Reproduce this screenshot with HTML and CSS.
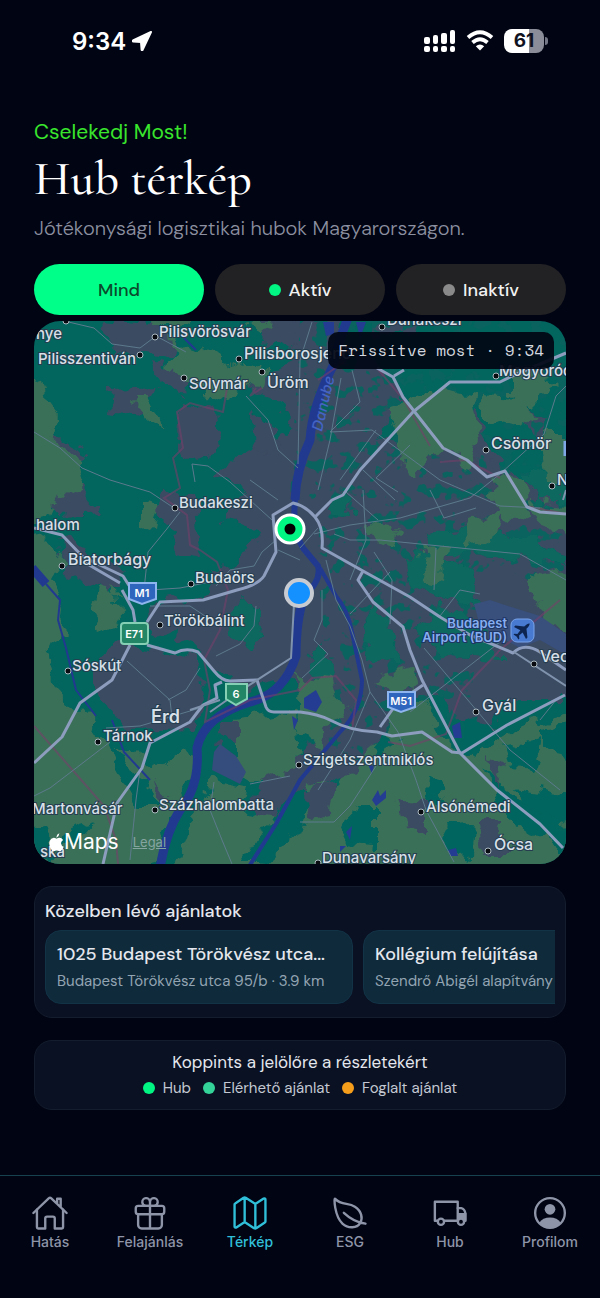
FILE: index.html
```html
<!DOCTYPE html>
<html lang="hu">
<head>
    <meta charset="UTF-8">
    <meta name="viewport" content="width=device-width, initial-scale=1.0">
    <title>Hub térkép</title>
    <link rel="stylesheet" href="styles.css">
</head>
<body>
    <div class="status-bar">
        <div class="status-left">
            <span class="clock">9:34</span>
            <svg class="location" viewBox="0 0 20 20"><path d="M19 1 L1 9.5 Q0 10.2 1.2 10.4 L9 11 L9.6 18.8 Q9.9 20 10.6 18.9 Z" fill="#fff" stroke="#fff" stroke-width="2" stroke-linejoin="round"/></svg>
        </div>
        <div class="status-right">
            <svg class="signal" viewBox="0 0 32 22" fill="#fff">
                <rect x="0" y="7" width="6" height="7" rx="2"/><rect x="9" y="5" width="5" height="9" rx="2"/><rect x="17" y="3" width="6" height="11" rx="2"/><rect x="26" y="0" width="5" height="14" rx="2"/>
                <rect x="0" y="16" width="6" height="6" rx="2"/><rect x="9" y="16" width="5" height="6" rx="2"/><rect x="17" y="16" width="6" height="6" rx="2"/><rect x="26" y="16" width="5" height="6" rx="2"/>
            </svg>
            <svg class="wifi" viewBox="0 0 28 22" fill="none" stroke="#fff" stroke-width="3.8">
                <path d="M2 7.5 Q14 -3 26 7.5"/><path d="M6.5 12.5 Q14 6 21.5 12.5"/><path d="M14 20.5 L9.8 16.2 Q14 12.8 18.2 16.2 Z" fill="#fff" stroke="none"/>
            </svg>
            <span class="battery">61</span>
        </div>
    </div>

    <main>
        <header>
            <p class="eyebrow">Cselekedj Most!</p>
            <h1>Hub térkép</h1>
            <p class="subtitle">Jótékonysági logisztikai hubok Magyarországon.</p>
        </header>

        <div class="filters">
            <button type="button" class="filter active">Mind</button>
            <button type="button" class="filter"><span class="dot green"></span>Aktív</button>
            <button type="button" class="filter"><span class="dot gray"></span>Inaktív</button>
        </div>

        <section class="map">
            <svg class="map-canvas" viewBox="34 321 532 543" preserveAspectRatio="xMidYMid slice">
                <defs>
                    <filter id="rough" x="-5%" y="-5%" width="110%" height="110%">
                        <feTurbulence type="fractalNoise" baseFrequency="0.05" numOctaves="3" seed="4" result="n"/>
                        <feDisplacementMap in="SourceGraphic" in2="n" scale="26" xChannelSelector="R" yChannelSelector="G"/>
                    </filter>
                    <filter id="specks" x="0" y="0" width="100%" height="100%" color-interpolation-filters="sRGB">
                        <feTurbulence type="fractalNoise" baseFrequency="0.07" numOctaves="3" seed="11"/>
                        <feColorMatrix values="0 0 0 0 0.04  0 0 0 0 0.39  0 0 0 0 0.37  16 0 0 0 -9.1" result="s"/>
                        <feComposite in="s" in2="SourceGraphic" operator="in"/>
                    </filter>
                </defs>

                <rect x="34" y="321" width="532" height="543" fill="#02655e"/>

                <!-- towns -->
                <g fill="#3b4b62" filter="url(#rough)">
                    <path d="M286 310 L344 310 L336 350 L360 352 L400 380 L400 410 L380 440 L420 450 L444 444 L500 462 L520 480 L580 500 L580 700 L500 700 L496 726 L464 730 L444 690 L410 700 L404 730 L372 772 L330 780 L262 830 L248 800 L300 750 L330 730 L300 690 L284 680 L240 690 L196 650 L176 640 L178 606 L216 590 L214 570 L252 552 L262 530 L222 518 L244 490 L214 470 L262 446 L294 430 L276 400 L250 390 L272 370 L294 360Z"/>
                    <path d="M180 404 L216 408 L222 452 L186 462 L176 430Z M114 390 L154 388 L142 416 L112 412Z"/>
                    <path d="M104 318 L150 322 L180 346 L160 356 L112 350Z M154 360 L186 366 L184 396 L162 388Z"/>
                    <path d="M250 410 L276 430 L278 460 L256 450Z M260 316 L300 316 L294 340 L266 350Z"/>
                    <path d="M34 424 L56 436 L86 452 L80 468 L46 448Z M42 496 L74 480 L104 514 L60 516Z"/>
                    <path d="M60 538 L90 548 L124 576 L108 594 L62 570Z M164 486 L194 500 L200 556 L178 552 L158 510Z"/>
                    <path d="M94 664 L120 640 L140 644 L150 652 L196 660 L206 700 L190 730 L130 732 L112 710 L94 690Z"/>
                    <path d="M148 606 L180 600 L184 620 L152 636Z"/>
                    <path d="M222 724 L244 724 L240 748 L220 744Z M214 782 L230 800 L222 830 L204 822Z"/>
                    <path d="M372 312 L420 316 L410 336 L370 338Z M476 405 L484 440 L510 460 L478 466 L466 440Z M520 400 L552 420 L540 444 L516 420Z"/>
                </g>
                <path filter="url(#specks)" d="M300 321 L566 321 L566 600 L490 560 L470 700 L420 760 L330 760 L318 560 L320 500 L290 500Z"/>

                <!-- parks and woods between the districts -->
                <g fill="#08685e" filter="url(#rough)">
                    <path d="M424 536 L500 530 L566 552 L566 566 L510 556 L432 552Z M404 556 L430 554 L470 572 L480 606 L446 600 L410 584Z"/>
                    <path d="M372 600 L392 630 L402 664 L374 660 L362 630Z M440 600 L500 640 L500 660 L440 656 L420 630Z"/>
                    <path d="M336 490 L356 500 L346 520 L330 510Z M240 600 L262 606 L258 650 L236 640 L226 616Z"/>
                    <path d="M520 470 L566 480 L566 500 L536 500Z M322 640 L334 680 L322 690 L310 664Z"/>
                </g>

                <!-- farmland -->
                <g fill="#3b7058" filter="url(#rough)">
                    <path d="M24 436 L50 436 L66 450 L88 466 L78 490 L58 498 L50 516 L24 522Z"/>
                    <path d="M24 376 L42 382 L46 402 L58 418 L54 438 L24 436Z"/>
                    <path d="M24 540 L50 535 L62 560 L48 580 L64 610 L60 640 L42 650 L56 700 L24 700Z"/>
                    <path d="M96 590 L118 592 L120 620 L100 628 L90 610Z M110 584 L122 586 L124 600Z"/>
                    <path d="M142 504 L160 508 L156 530 L142 524Z M134 396 L146 396 L168 432 L150 424Z"/>
                    <path d="M145 310 L190 310 L184 328 L150 328Z M170 340 L205 350 L246 368 L230 402 L200 394 L174 366Z"/>
                    <path d="M240 360 L268 366 L266 392 L244 388Z M246 318 L270 318 L262 338Z"/>
                    <path d="M24 690 L62 694 L88 716 L106 744 L134 748 L150 770 L184 744 L200 770 L180 800 L164 830 L150 884 L24 884Z"/>
                    <path d="M236 720 L294 710 L298 772 L262 784 L236 768Z"/>
                    <path d="M210 780 L244 788 L240 810 L300 820 L310 780 L330 790 L350 770 L384 740 L440 736 L486 766 L510 800 L544 820 L584 850 L584 884 L170 884 L192 820Z"/>
                    <path d="M298 676 L332 680 L342 712 L320 744 L296 734Z M376 682 L412 664 L416 684 L392 704Z"/>
                    <path d="M384 710 L424 700 L446 740 L430 760 L380 756Z"/>
                    <path d="M470 756 L520 726 L584 710 L584 838 L540 806 L500 794Z"/>
                    <path d="M390 410 L430 386 L472 396 L478 440 L468 464 L440 450 L418 474 L400 460Z"/>
                    <path d="M484 396 L520 398 L540 416 L520 430 L486 420Z M510 368 L554 380 L528 406 L510 394Z"/>
                    <path d="M496 474 L526 480 L528 514 L508 524 L494 500Z M544 436 L584 436 L584 484 L548 480Z"/>
                    <path d="M530 500 L584 506 L584 540 L540 530Z M468 524 L502 508 L496 538 L470 550Z"/>
                    <path d="M530 576 L584 566 L584 640 L544 620Z M420 545 L446 544 L442 584 L424 580Z M374 524 L400 526 L396 544 L376 540Z"/>
                </g>

                <!-- forest inside the fields -->
                <g fill="#02655e" filter="url(#rough)">
                    <path d="M352 806 L378 806 L378 850 L342 846Z M500 746 L544 736 L534 770 L508 768Z"/>
                    <path d="M516 786 L576 796 L560 826 L530 814Z M440 826 L470 824 L468 854 L446 850Z"/>
                    <path d="M96 820 L70 828 L56 852 L76 842Z M546 726 L576 722 L572 756 L546 750Z"/>
                    <path d="M290 790 L316 790 L300 830 L262 864 L240 864 L276 816Z M426 776 L444 782 L438 810 L424 804Z"/>
                    <path d="M106 740 L128 756 L148 790 L160 810 L140 810 L120 776Z M482 766 L504 790 L560 830 L580 850 L560 850 L500 810Z"/>
                    <path d="M460 726 L500 716 L476 750 L464 752Z M34 826 L60 856 L50 868 L34 850Z M378 730 L400 740 L384 764Z"/>
                </g>
                <g fill="#3b4b62" filter="url(#rough)">
                    <path d="M398 798 L426 802 L426 828 L404 826Z M476 822 L504 822 L502 856 L480 856Z M490 756 L504 764 L496 788Z"/>
                    <path d="M306 792 L334 782 L330 816 L312 820Z M152 782 L170 796 L160 810Z M260 780 L300 766 L300 790 L280 816Z"/>
                </g>
                <path d="M474 604 L490 600 L508 606 L540 616 L566 634 L566 655 L540 640 L520 648 L480 626Z" fill="#394f7c"/>
                <path d="M214 752 L220 744 L236 756 L246 772 L240 784 L212 770Z" fill="#354d7c"/>

                <!-- Danube and lakes -->
                <g class="water">
                    <path d="M348 318 Q338 342 334 364 Q312 406 310 440 Q296 470 295 500" stroke-width="9"/>
                    <path d="M295 500 Q292 530 303 548 L318 566 Q322 580 304 596" stroke-width="6"/>
                    <path d="M304 596 Q296 620 296 656 Q284 694 250 702 Q204 716 197 748 Q200 786 180 810 Q166 832 160 868" stroke-width="9"/>
                    <path d="M320 568 L336 596 Q348 610 352 632 L362 680 Q362 710 340 732 L300 780 L276 824 L248 868" stroke-width="4"/>
                    <path d="M46 584 L60 600 L58 620 L66 648 L76 690 L96 716" stroke-width="2"/>
                    <path d="M32 568 L46 584" stroke-width="9"/>
                    <path d="M112 720 L124 752 L150 780 M184 338 L196 350" stroke-width="2"/>
                </g>
                <g fill="#243c91">
                    <path d="M304 698 L316 690 L322 702 L316 712 L304 708Z M323 322 L334 322 L334 334 L326 336Z M356 322 L366 322 L360 338Z M452 726 L460 722 L462 738 L454 738Z"/>
                    <path d="M372 800 L378 790 L380 796 L386 790 L386 798 L376 806Z M346 832 L352 826 L350 840Z M448 850 L456 848 L458 856 L450 856Z M292 716 L298 720 L294 730Z M368 764 L374 766 L372 774Z M340 846 L346 846 L340 852Z"/>
                </g>

                <!-- county and city limits -->
                <g class="border">
                    <path d="M227 388 L223 412 L190 403 L177 412 L183 448 L173 458 L180 488 L164 498 L187 515 L190 545 L200 550 L217 562 L228 590 L220 630 L204 660 L210 690 L205 722 L250 700 L300 690 L312 678 L336 676 L356 700 L352 730"/>
                    <path d="M377 368 L404 400 L430 446 M440 462 L466 460 L500 478 M526 506 L566 514"/>
                    <path d="M388 742 L410 746 L446 734 L462 690 L500 650 L560 600"/>
                    <path d="M34 726 L76 774 L104 806 L116 840 L118 864"/>
                    <path d="M256 388 L250 396 L262 388 M318 380 L344 362"/>
                </g>

                <!-- minor roads -->
                <g class="road-minor">
                    <path d="M60 320 L94 328 L112 344 L140 348 L156 336 L186 352 M34 432 L60 448 L82 468 L110 480 L150 492 L174 508"/>
                    <path d="M180 512 L166 530 L148 552 L144 590 M195 482 L192 464 L208 466 L230 482 L272 520"/>
                    <path d="M246 396 L268 420 L278 450 L298 468 M298 464 L300 360 L312 322"/>
                    <path d="M341 378 L330 440 L318 490 M352 370 L360 402 L330 432 L372 430 L440 480 L500 506 L540 508"/>
                    <path d="M314 534 L350 525 L400 518 L470 498 L500 474 L544 434 L556 396 L566 386"/>
                    <path d="M376 430 L340 480 M410 445 L376 478 L398 492 M346 492 L378 520 M430 490 L444 518 L476 508"/>
                    <path d="M363 470 L395 500 M334 534 L350 540 L380 540 L440 546 L520 554 L566 580"/>
                    <path d="M326 560 L336 600 L350 626 L362 660 L370 692 L398 732 L416 780 L426 810 L454 862"/>
                    <path d="M363 490 L366 540 L350 580 M374 552 L392 580 L390 624 M436 548 L434 590 M318 528 L300 548"/>
                    <path d="M322 590 L322 620 L314 640 L328 654 L302 678 M350 614 L390 572 M370 692 L350 740 L318 790"/>
                    <path d="M424 648 L510 750 L560 790 M410 712 L500 642 M440 616 L460 590 L480 594"/>
                    <path d="M127 661 L170 700 L172 718 M200 668 L186 690 L168 700 M106 728 L140 726 L200 708"/>
                    <path d="M34 796 L50 788 L84 762 L110 742 M214 782 L210 810 L222 840 L232 864 M250 784 L290 776"/>
                    <path d="M130 860 L136 800 L140 770 M376 766 L350 806 L334 822 L300 822 M540 720 L556 700"/>
                    <path d="M150 606 L190 606 L208 618 M216 656 L240 644 L254 626 L256 606 M150 590 L180 588 L210 582"/>
                    <path d="M276 540 L262 552 L254 566 L230 570 L216 586 M278 550 L300 560 M278 500 L250 480"/>
                </g>

                <!-- main roads -->
                <g class="road">
                    <path d="M34 528 L62 535 L83 557 L123 576 L130 587 M84 562 L120 583"/>
                    <path d="M147 622 L160 602 L203 600 L237 590 Q258 585 264 576 L276 552 L273 515 L293 503 Q306 506 315 517 Q324 528 322 548 L363 571 L410 597 L440 617 L470 635 L513 653 Q524 642 540 652 L566 670"/>
                    <path d="M315 517 L332 500 L343 495 L360 470 L413 412 L450 382 L500 382 L512 376 L566 353"/>
                    <path d="M377 368 L393 377 L403 397 L443 448 L467 460 L487 477 L505 471 L527 507 L540 512 L566 514 M394 376 L404 370"/>
                    <path d="M122 590 L133 610 L135 622 M130 645 L112 680 L80 703 L62 737 L34 763"/>
                    <path d="M147 645 L175 653 Q186 647 198 652 L214 671 Q222 681 230 681 L257 680 L266 707 Q268 712 274 712 L300 712 Q318 714 330 720 Q350 731 377 732 L392 736 L422 732 L452 752 L462 753 L507 725 L565 695"/>
                    <path d="M363 571 L358 580 L373 602 L403 627 L410 650 L422 680 L460 753 L497 790 L540 824 L563 848"/>
                    <path d="M423 685 L397 703 L380 727"/>
                    <path d="M222 682 L215 685 L217 698 L203 705 L190 722 L150 743 L142 768 L117 803 L103 864"/>
                </g>
                <path class="road-thin" d="M294 604 L291 658 L237 693 L210 712 M220 700 L190 710 M514 652 L566 686 M563 500 L566 490"/>

                <!-- road shields -->
                <g class="shield">
                    <path d="M129 583 H156 V599 L142 604 L129 599Z" fill="#2f66bd" stroke="#8fb5ee"/>
                    <text x="142" y="597">M1</text>
                    <rect x="121" y="623" width="27" height="21" rx="3" fill="#228566" stroke="#85d0b4"/>
                    <text x="134" y="638">E71</text>
                    <path d="M226 684 H247 V699 L236 705 L226 699Z" fill="#228566" stroke="#85d0b4"/>
                    <text x="236" y="698">6</text>
                    <path d="M388 692 H415 V707 L401 712 L388 707Z" fill="#2f66bd" stroke="#8fb5ee"/>
                    <text x="401" y="705">M51</text>
                </g>

                <!-- places -->
                <g class="place-dot">
                    <circle cx="155" cy="337" r="3"/><circle cx="140" cy="355" r="3"/><circle cx="239" cy="359" r="3"/><circle cx="262" cy="372" r="3"/>
                    <circle cx="184" cy="378" r="3"/><circle cx="175" cy="508" r="3"/><circle cx="62" cy="566" r="3"/><circle cx="191" cy="584" r="3"/>
                    <circle cx="160" cy="625" r="3"/><circle cx="68" cy="671" r="3"/><circle cx="98" cy="742" r="3"/><circle cx="155" cy="810" r="3"/>
                    <circle cx="382" cy="327" r="3"/><circle cx="496" cy="376" r="3"/><circle cx="486" cy="450" r="3"/><circle cx="552" cy="486" r="3"/>
                    <circle cx="534" cy="664" r="3"/><circle cx="476" cy="712" r="3"/><circle cx="299" cy="765" r="3"/><circle cx="421" cy="812" r="3"/>
                    <circle cx="488" cy="851" r="3"/><circle cx="318" cy="863" r="3"/><circle cx="66" cy="321" r="3"/>
                </g>
                <g class="place">
                    <text x="36" y="339">nye</text>
                    <text x="159" y="337">Pilisvörösvár</text>
                    <text x="38" y="364">Pilisszentiván</text>
                    <text x="189" y="389">Solymár</text>
                    <text x="179" y="508">Budakeszi</text>
                    <text x="36" y="530">halom</text>
                    <text x="195" y="583">Budaörs</text>
                    <text x="164" y="626">Törökbálint</text>
                    <text x="72" y="671">Sóskút</text>
                    <text x="103" y="741">Tárnok</text>
                    <text x="32" y="814">Martonvásár</text>
                    <text x="159" y="810">Százhalombatta</text>
                    <text x="303" y="765">Szigetszentmiklós</text>
                    <text x="426" y="812">Alsónémedi</text>
                    <text x="322" y="863">Dunavarsány</text>
                    <text x="40" y="857">ska</text>
                    <text x="387" y="325">Dunakeszi</text>
                    <text x="499" y="376">Mogyoród</text>
                    <text x="557" y="485">Nagytarcsa</text>
                </g>
                <g class="place town">
                    <text x="244" y="359">Pilisborosjenő</text>
                    <text x="267" y="388">Üröm</text>
                    <text x="68" y="565">Biatorbágy</text>
                    <text x="491" y="449">Csömör</text>
                    <text x="540" y="662">Vecsés</text>
                    <text x="482" y="711">Gyál</text>
                    <text x="494" y="850">Ócsa</text>
                </g>
                <text class="place city" x="151" y="723">Érd</text>
                <text class="river" transform="translate(322 432) rotate(-77)">Danube</text>
                <path d="M565 441 V456" stroke="#7fa7e6" stroke-width="3"/>

                <g class="airport">
                    <text x="507" y="628">Budapest</text>
                    <text x="507" y="642">Airport (BUD)</text>
                    <rect x="511" y="619" width="23" height="23" rx="6" fill="#477ad0" stroke="#79a4ea"/>
                    <path transform="translate(522.5 630.5) rotate(45)" d="M0 -10 Q1.6 -9 1.6 -4 L8.500 1.500 V3.500 L1.600 1.400 L1.200 6 L3.500 8 V9.200 L0 8.400 L-3.500 9.200 V8 L-1.200 6 L-1.600 1.400 L-8.500 3.500 V1.500 L-1.600 -4 Q-1.600 -9 0 -10Z" fill="#0d2550"/>
                </g>

                <!-- hub marker and own position -->
                <circle cx="290" cy="529" r="14" fill="#00f582" stroke="#fff" stroke-width="3"/>
                <circle cx="290" cy="529" r="5.500" fill="#000"/>
                <circle cx="299" cy="593" r="13" fill="#1590ff" stroke="#c8ccd2" stroke-width="4"/>
            </svg>
            <div class="updated">Frissítve most · 9:34</div>
            <div class="attribution">
                <svg class="apple" viewBox="0 0 16 20" fill="#fff"><path d="M11 0 Q11.300 3 8 4.800 Q7.500 1.500 11 0Z M8 6 Q9.500 5 11.200 5 Q13.700 5.100 15 7.200 Q12.700 8.700 12.900 11 Q13.100 13.600 15.700 14.600 Q13.700 19.600 11.200 19.300 Q9.700 18.500 8.200 18.500 Q6.700 18.500 5.200 19.300 Q3.400 19.500 1.600 16 Q-.5 12 .7 8.500 Q2 5.200 5 5 Q6.500 5 8 6Z"/></svg>
                <span class="maps-name">Maps</span>
                <a href="#" class="legal">Legal</a>
            </div>
        </section>

        <section class="panel nearby">
            <h2>Közelben lévő ajánlatok</h2>
            <div class="offers">
                <article class="offer">
                    <h3>1025 Budapest Törökvész utca...</h3>
                    <p>Budapest Törökvész utca 95/b · 3.9 km</p>
                </article>
                <article class="offer">
                    <h3>Kollégium felújítása</h3>
                    <p>Szendrő Abigél alapítvány</p>
                </article>
            </div>
        </section>

        <section class="panel legend">
            <p class="legend-title">Koppints a jelölőre a részletekért</p>
            <div class="legend-items">
                <span class="legend-item"><span class="dot green"></span>Hub</span>
                <span class="legend-item"><span class="dot teal"></span>Elérhető ajánlat</span>
                <span class="legend-item"><span class="dot orange"></span>Foglalt ajánlat</span>
            </div>
        </section>
    </main>

    <nav class="tab-bar">
        <a href="#" class="tab">
            <svg viewBox="0 0 512 512"><path d="M80 212v236a16 16 0 0016 16h96V328a24 24 0 0124-24h80a24 24 0 0124 24v136h96a16 16 0 0016-16V212"/><path d="M480 256L266.890 52c-5-5.280-16.690-5.340-21.780 0L32 256M400 179V64h-48v69"/></svg>
            Hatás
        </a>
        <a href="#" class="tab">
            <svg viewBox="0 0 512 512"><path d="M256 104v56h-48a52 52 0 1148-56zM256 104v56h48a52 52 0 10-48-56z"/><rect x="64" y="160" width="384" height="112" rx="32"/><path d="M416 272v144a48 48 0 01-48 48H144a48 48 0 01-48-48V272M256 160v304"/></svg>
            Felajánlás
        </a>
        <a href="#" class="tab current">
            <svg viewBox="0 0 512 512"><path d="M313.270 124.640L198.730 51.360a32 32 0 00-29.280.350L56.510 127.490A16 16 0 0048 141.630v295.800a16 16 0 0023.490 14.140l97.820-63.790a32 32 0 0129.500-.240l111.860 73a32 32 0 0029.270-.110l115.430-75.940a16 16 0 008.630-14.200V74.570a16 16 0 00-23.490-14.140l-98 63.860a32 32 0 01-29.240.350zM328 128v336M184 48v336"/></svg>
            Térkép
        </a>
        <a href="#" class="tab">
            <svg viewBox="0 0 512 512"><path d="M321.890 171.420C233 114 141 155.220 56 65.220c-19.800-21-8.300 235.500 98.100 332.700 77.790 71 197.900 63.080 238.400-5.920s18.280-163.170-70.610-220.580zM173 253c86 81 175 129 292 147"/></svg>
            ESG
        </a>
        <a href="#" class="tab">
            <svg viewBox="0 0 512 512"><path d="M92 360H52V104h308v256H176"/><path d="M360 190h48q44 8 56 72v98h-20"/><path d="M360 256h116v104h-30a46 46 0 00-86-10z" fill="currentColor" stroke="none"/><circle cx="134" cy="374" r="42"/><circle cx="404" cy="374" r="42"/></svg>
            Hub
        </a>
        <a href="#" class="tab">
            <svg viewBox="0 0 512 512"><circle cx="256" cy="256" r="200"/><circle cx="256" cy="206" r="72" fill="currentColor" stroke="none"/><path d="M108 392Q160 318 256 318T404 392Q346 456 256 456T108 392Z" fill="currentColor" stroke="none"/></svg>
            Profilom
        </a>
    </nav>
</body>
</html>
```

FILE: styles.css
```css
* {
    box-sizing: border-box;
}

body {
    margin: 0;
    min-height: 100vh;
    display: flex;
    flex-direction: column;
    background: #010413;
    color: #e4e7ee;
    font-family: "DM Sans", Inter, sans-serif;
}

h1, h2, h3, p {
    margin: 0;
    font-weight: 400;
}

.status-bar {
    display: flex;
    justify-content: space-between;
    align-items: center;
    padding: 24px 56px 0 72px;
    height: 58px;
    font-family: Inter, sans-serif;
}

.status-left, .status-right {
    display: flex;
    align-items: center;
}

.status-left {
    gap: 6px;
}

.status-right {
    gap: 10px;
}

.clock {
    color: #fff;
    font-size: 24px;
    font-weight: 600;
}

.location {
    width: 20px;
    height: 20px;
}

.signal {
    width: 32px;
    height: 22px;
}

.wifi {
    width: 28px;
    height: 22px;
}

.battery {
    position: relative;
    width: 40px;
    height: 24px;
    border-radius: 8px;
    background: linear-gradient(to right, #fff 62%, #8b8d99 62%);
    color: #10131f;
    font-size: 19px;
    font-weight: 700;
    line-height: 24px;
    text-align: center;
}

.battery::after {
    content: "";
    position: absolute;
    right: -4px;
    top: 8px;
    width: 3px;
    height: 8px;
    border-radius: 0 3px 3px 0;
    background: #747786;
}

main {
    padding: 60px 34px 0;
}

.eyebrow {
    color: #39e62d;
    font-size: 21px;
    line-height: 28px;
}

h1 {
    color: #fff;
    font-family: "Cormorant Garamond", "Liberation Serif", serif;
    font-size: 48px;
    font-weight: 500;
    line-height: 66px;
}

.subtitle {
    color: #8c90a0;
    font-size: 20px;
    font-weight: 300;
    line-height: 32px;
}

.filters {
    display: flex;
    gap: 11px;
    margin-top: 20px;
}

.filter {
    flex: 1;
    display: flex;
    align-items: center;
    justify-content: center;
    gap: 8px;
    height: 51px;
    border: 0;
    border-radius: 26px;
    background: #222224;
    color: #f2f2f2;
    font-family: inherit;
    font-size: 18px;
    font-weight: 500;
    cursor: pointer;
}

.filter.active {
    background: #00ff88;
    color: #0b4a2c;
}

.dot {
    width: 12px;
    height: 12px;
    border-radius: 50%;
}

.green {
    background: #00f582;
}

.gray {
    background: #8a8a8a;
}

.teal {
    background: #34d399;
}

.orange {
    background: #f59e1b;
}

/* map */
.map {
    position: relative;
    margin-top: 6px;
    aspect-ratio: 532 / 543;
    border-radius: 26px;
    overflow: hidden;
    font-family: Inter, sans-serif;
}

.map-canvas {
    display: block;
    width: 100%;
    height: 100%;
}

.water path {
    fill: none;
    stroke: #213a90;
    stroke-linejoin: round;
}

.border {
    fill: none;
    stroke: #75406a;
    stroke-width: 2;
    opacity: .6;
}

.road {
    fill: none;
    stroke: #8c9dbd;
    stroke-width: 3;
    stroke-linejoin: round;
}

.road-thin {
    fill: none;
    stroke: #8093ad;
    stroke-width: 2;
}

.road-minor {
    fill: none;
    stroke: #5c7a8c;
    stroke-width: 1;
    stroke-linejoin: round;
}

.shield {
    stroke-width: 2;
}

.shield text {
    fill: #fff;
    stroke: none;
    font-size: 11px;
    font-weight: 600;
    text-anchor: middle;
}

.place-dot {
    fill: #080b10;
    stroke: #aab8c0;
    stroke-width: 1;
}

.place {
    fill: #d8e0e8;
    stroke: #263d50;
    stroke-width: 2;
    paint-order: stroke;
    font-size: 15px;
    font-weight: 500;
}

.town {
    font-size: 16px;
}

.city {
    font-size: 18px;
    font-weight: 600;
}

.river {
    fill: #4463c4;
    font-size: 15px;
    font-style: italic;
    font-weight: 500;
}

.airport text {
    fill: #87aef0;
    stroke: #1d3564;
    stroke-width: 2;
    paint-order: stroke;
    font-size: 13px;
    font-weight: 600;
    text-anchor: end;
}

.updated {
    position: absolute;
    top: 11px;
    right: 12px;
    padding: 0 10px;
    border-radius: 10px;
    background: rgba(1, 6, 20, .93);
    color: #d3d7df;
    font-family: "Space Mono", "Liberation Mono", monospace;
    font-size: 16px;
    line-height: 37px;
}

.attribution {
    position: absolute;
    left: 15px;
    bottom: 8px;
    display: flex;
    align-items: center;
}

.apple {
    width: 15px;
    height: 19px;
}

.maps-name {
    color: #fff;
    font-size: 21px;
    line-height: 28px;
}

.legal {
    margin-left: 14px;
    color: #84a5a0;
    font-size: 13px;
}

/* panels */
.panel {
    margin-top: 22px;
    border: 1px solid #131d2d;
    border-radius: 18px;
    background: #0a1122;
}

.nearby {
    padding: 10px 10px 13px;
}

.nearby h2 {
    font-size: 18px;
    font-weight: 500;
    line-height: 28px;
}

.offers {
    display: flex;
    gap: 10px;
    margin-top: 5px;
    overflow: hidden;
}

.offer {
    flex: 0 0 308px;
    padding: 9px 11px 8px;
    border: 1px solid #123346;
    border-radius: 16px;
    background: #0f2a3b;
    white-space: nowrap;
}

.offer h3 {
    font-size: 18px;
    font-weight: 500;
    line-height: 28px;
}

.offer p {
    color: #93a4b2;
    font-size: 15px;
    line-height: 27px;
}

.legend {
    padding: 8px 10px;
    text-align: center;
}

.legend-title {
    font-size: 17px;
    line-height: 26px;
}

.legend-items {
    display: flex;
    justify-content: center;
    gap: 12px;
    color: #c3c8d2;
    font-size: 15px;
    line-height: 26px;
}

.legend-item {
    display: flex;
    align-items: center;
    gap: 8px;
}

/* bottom navigation */
.tab-bar {
    display: flex;
    margin-top: auto;
    padding: 18px 0 46px;
    border-top: 1px solid #16424f;
    font-family: Inter, sans-serif;
}

.tab {
    flex: 1;
    display: flex;
    flex-direction: column;
    align-items: center;
    color: #8e95a8;
    font-size: 14px;
    font-weight: 500;
    line-height: 20px;
    text-decoration: none;
}

.tab svg {
    width: 38px;
    height: 38px;
    fill: none;
    stroke: currentColor;
    stroke-width: 32;
    stroke-linecap: round;
    stroke-linejoin: round;
}

.current {
    color: #30bfd8;
}
```
